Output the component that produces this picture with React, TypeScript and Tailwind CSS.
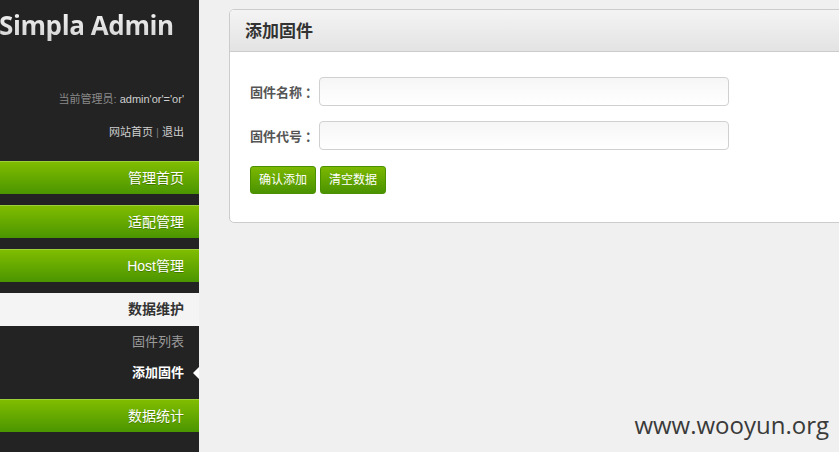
const navClass =
  "h-[33px] leading-[33px] pr-[15px] text-right text-[14px] text-white bg-gradient-to-b from-[#80bd00] to-[#4a9500] border-t border-[#9ccf3a] [text-shadow:0_1px_0_rgba(0,0,0,0.25)]";

const cjk = { fontFamily: "'Liberation Sans', 'Noto Sans CJK SC', sans-serif" };

const Sidebar = () => (
  <div className="w-[199px] shrink-0 h-full bg-[#232323] flex flex-col" style={cjk}>
    <h1
      className="h-[50px] leading-[50px] text-[26px] font-bold text-transparent bg-clip-text bg-gradient-to-b from-white to-[#c8c8c8] whitespace-nowrap -ml-[1px] tracking-[-0.4px]"
      style={{ fontFamily: "'Open Sans', sans-serif" }}
    >
      Simpla Admin
    </h1>
    <p className="mt-[39px] leading-[20px] text-[11px] text-right pr-[15px] text-[#8a8a8a]">
      当前管理员: <span className="text-[#cfcfcf]">admin'or'='or'</span>
    </p>
    <p className="mt-[13px] leading-[20px] text-[11px] text-right pr-[15px] text-[#cfcfcf]">
      网站首页 <span className="text-[#777]">|</span> 退出
    </p>
    <div className="mt-[19px] flex flex-col gap-[11px]">
      <div className={navClass}>管理首页</div>
      <div className={navClass}>适配管理</div>
      <div className={navClass}>Host管理</div>
      <div className="h-[33px] leading-[33px] pr-[15px] text-right text-[14px] font-bold text-[#333] bg-[#f4f4f4]">
        数据维护
      </div>
    </div>
    <ul className="text-[13px] text-right">
      <li className="h-[31px] leading-[31px] pr-[15px] text-[#9a9a9a]">固件列表</li>
      <li className="h-[31px] leading-[31px] pr-[15px] text-white font-bold relative">
        添加固件
        <span className="absolute right-0 top-[10px] w-0 h-0 border-y-[6px] border-y-transparent border-r-[6px] border-r-white" />
      </li>
    </ul>
    <div className={navClass + " mt-[11px]"}>数据统计</div>
  </div>
);

const Field = ({ label }: { label: string }) => (
  <div className="flex items-center">
    <label
      className="w-[69px] shrink-0 whitespace-nowrap text-[13px] font-bold text-[#555]"
      style={{ fontFamily: "'Noto Sans CJK SC', sans-serif" }}
    >
      {label}
      <span className="ml-[3px]">：</span>
    </label>
    <input
      type="text"
      className="w-[410px] h-[29px] border border-[#d0d0d0] rounded-[4px] bg-gradient-to-b from-[#f6f6f6] to-white outline-none"
    />
  </div>
);

export default function App() {
  return (
    <div className="w-[839px] h-[452px] flex bg-[#f0f0f0] overflow-hidden relative">
      <Sidebar />
      <div className="flex-1 pl-[30px] pt-[9px] overflow-hidden" style={cjk}>
        <div className="w-[640px] bg-white border border-[#cccccc] rounded-l-[5px] overflow-hidden">
          <div className="h-[42px] border-b border-[#cccccc] bg-gradient-to-b from-[#f4f4f4] to-[#e3e3e3] pl-[15px] pt-[3px] flex items-center">
            <h3 className="text-[17px] font-bold text-[#333]">添加固件</h3>
          </div>
          <div className="pl-[20px] pt-[25px] pb-[28px] flex flex-col gap-[15px]">
            <Field label="固件名称" />
            <Field label="固件代号" />
            <div className="flex gap-[4px] mt-[1px]">
              <button className="h-[28px] px-[8px] text-[12px] text-white rounded-[3px] border border-[#4b9000] bg-gradient-to-b from-[#7cb800] to-[#4a9300]">
                确认添加
              </button>
              <button className="h-[28px] px-[8px] text-[12px] text-white rounded-[3px] border border-[#4b9000] bg-gradient-to-b from-[#7cb800] to-[#4a9300]">
                清空数据
              </button>
            </div>
          </div>
        </div>
      </div>
      <div
        className="absolute right-[10px] bottom-[15px] text-[24px] text-[#3a3a3a] leading-none"
        style={{ fontFamily: "'Open Sans', sans-serif" }}
      >
        www.wooyun.org
      </div>
    </div>
  );
}
